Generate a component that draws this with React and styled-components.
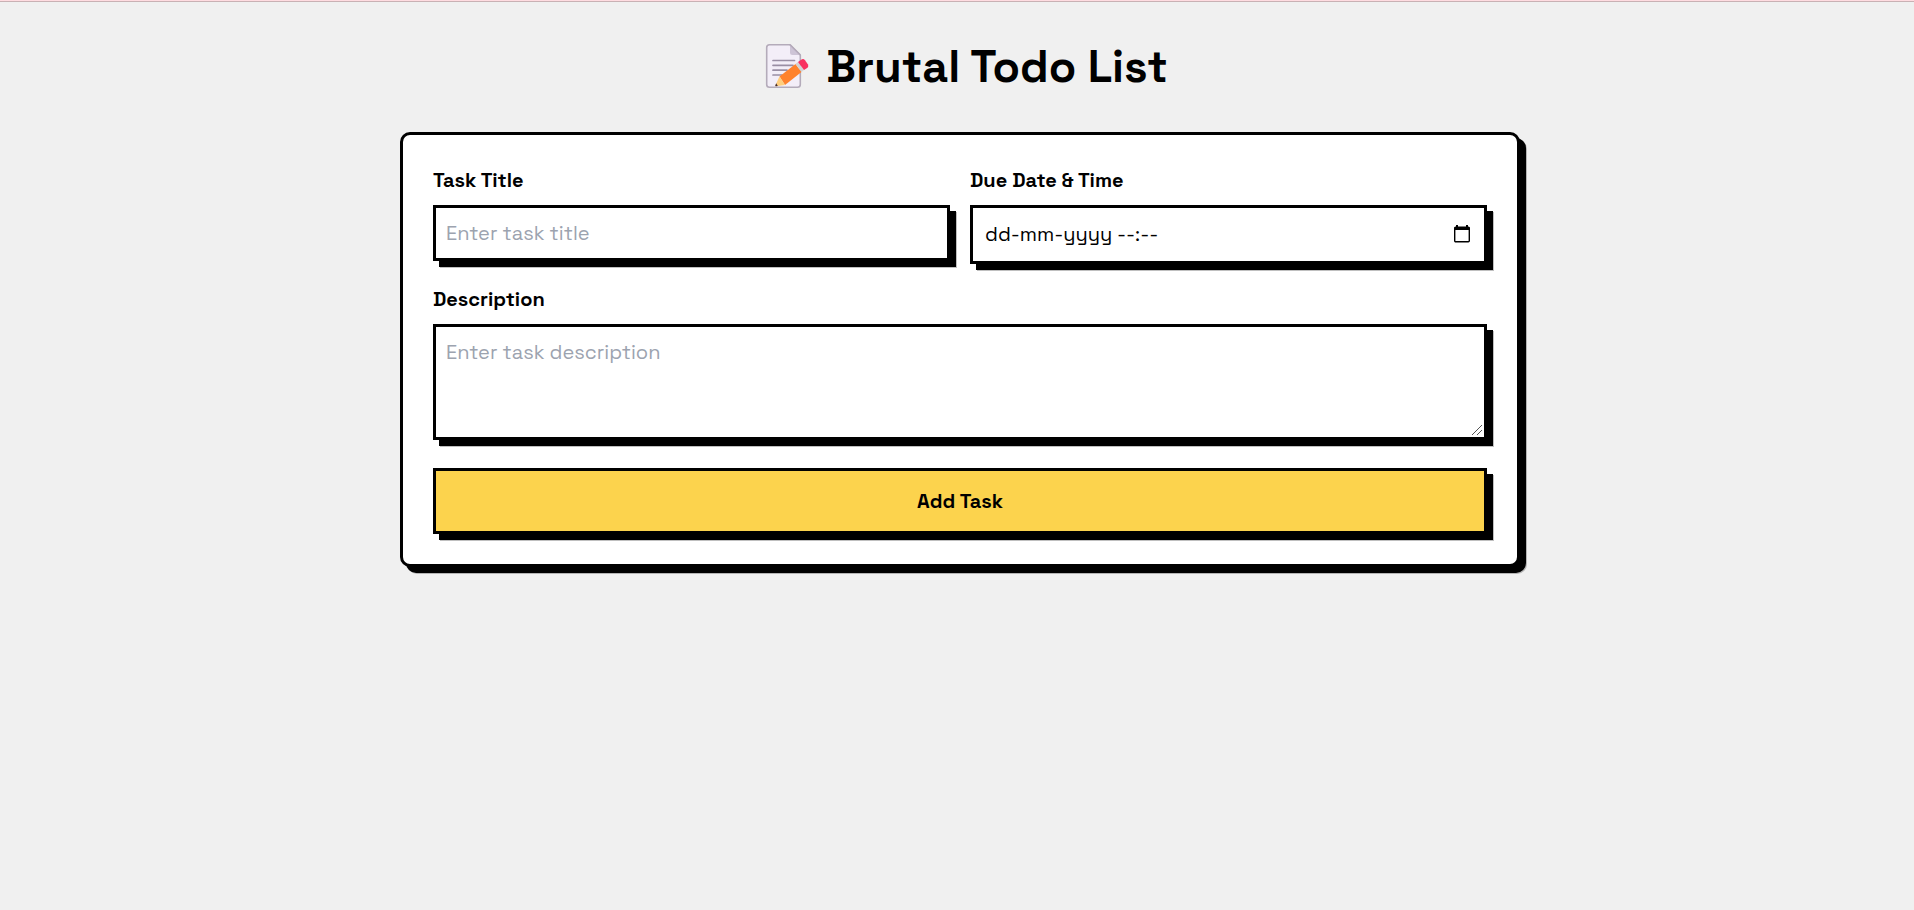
import React from "react";
import styled, { createGlobalStyle, css } from "styled-components";

const GlobalStyle = createGlobalStyle`
  *, *::before, *::after { box-sizing: border-box; }
  body {
    margin: 0;
    background: #f0f0f0;
    color: #000;
    font-family: "Space Grotesk", Inter, "Liberation Sans", sans-serif;
    font-size: 20px;
    line-height: 30px;
  }
  input, textarea, button { font: inherit; color: inherit; }
`;

const hardShadow = css`
  box-shadow: 6px 6px 0 #000, 7px 7px 0 rgba(0, 0, 0, 0.25);
`;

const Page = styled.div`
  border-top: 1px solid #ffdce1;
  box-shadow: inset 0 1px 0 #c9b1b4;
  padding: 41px 34px 40px 40px;
`;

const Container = styled.main`
  max-width: 1120px;
  margin: 0 auto;
`;

const Heading = styled.h1`
  display: flex;
  align-items: center;
  justify-content: center;
  gap: 12px;
  margin: 0 0 40px;
  font-size: 45px;
  line-height: 50px;
  font-weight: 700;
`;

const Form = styled.form`
  display: flex;
  flex-direction: column;
  gap: 20px;
  padding: 30px;
  background: #fff;
  border: 3px solid #000;
  border-radius: 10px;
  ${hardShadow}
`;

const FieldRow = styled.div`
  display: grid;
  grid-template-columns: 1fr 1fr;
  align-items: start;
  gap: 20px;
  @media (max-width: 760px) { grid-template-columns: 1fr; }
`;

const Field = styled.div`
  display: flex;
  flex-direction: column;
  gap: 10px;
  min-width: 0;
`;

const Label = styled.label`
  font-weight: 600;
`;

const boxed = css`
  width: 100%;
  background: #fff;
  border: 3px solid #000;
  border-radius: 0;
  ${hardShadow}
`;

const TextInput = styled.input`
  ${boxed}
  height: 56px;
  padding: 10px;
  outline: none;
  &::placeholder { color: #9ca3af; opacity: 1; }
`;

const TextArea = styled.textarea`
  ${boxed}
  display: block;
  padding: 10px;
  margin-bottom: 8px;
  outline: none;
  resize: vertical;
  &::placeholder { color: #9ca3af; opacity: 1; }
  &::-webkit-resizer {
    background: linear-gradient(
      135deg,
      transparent 45%, #555 46%, #555 53%, transparent 54%,
      transparent 70%, #555 71%, #555 78%, transparent 79%
    ) 3px 3px / 10px 10px no-repeat;
  }
`;

const DateBox = styled.div`
  ${boxed}
  display: flex;
  align-items: center;
  height: 59px;
  padding: 10px 13px 12px 12px;
`;

const DateInput = styled.input`
  flex: 1;
  min-width: 0;
  padding: 0;
  border: 0;
  outline: none;
  background: transparent;
  font-variant-numeric: tabular-nums;
  &::placeholder { color: #000; opacity: 1; }
`;

const PickerButton = styled.button`
  display: flex;
  padding: 0;
  border: 0;
  background: transparent;
  cursor: pointer;
`;

const SubmitButton = styled.button`
  ${boxed}
  padding: 15px;
  background: #fcd34d;
  font-weight: 600;
  cursor: pointer;
`;

const MemoIcon = () => (
  <svg width="62" height="50" viewBox="-2 0 62 50" aria-hidden="true">
    <path d="M15.500 2.700H36L46.300 13V42.500Q46.300 45.300 43.500 45.300H15.500Q12.700 45.300 12.700 42.500V5.500Q12.700 2.700 15.500 2.700Z" fill="#f3eef8" stroke="#b4abba" strokeWidth="1.600" />
    <path d="M36 2.700L46.300 13H38.500Q36 13 36 10.500Z" fill="#cdc4d6" />
    <path d="M36 2.700L46.300 13" stroke="#b4abba" strokeWidth="1.600" />
    <path d="M19 18.500H40.500M19 23.300H39M19 28.200H33M19 33H28" stroke="#998ea4" strokeWidth="1.700" strokeLinecap="round" />
    <path d="M25.500 34.500L41.500 22L47.500 30L31 43Z" fill="#ff822d" />
    <path d="M25.500 34.500L31 43L22 44.200Q21 44.300 21.400 43.200Z" fill="#ffce7c" />
    <path d="M22.200 41.200L23.800 43.900L22 44.200Q21 44.300 21.400 43.200Z" fill="#402a32" />
    <path d="M41.500 22L44 20L50 28L47.500 30Z" fill="#d3d3d3" />
    <path d="M44 20L47.500 17.400Q49.500 16.400 51 18.200L54 22.400Q54.900 24.400 53.500 25.700L50 28Z" fill="#f8315f" />
  </svg>
);

const CalendarIcon = () => (
  <svg width="18" height="20" viewBox="0 0 18 20" aria-hidden="true">
    <path d="M4 1V4M14 1V4" stroke="#000" strokeWidth="2" />
    <rect x="1.700" y="3.200" width="14.600" height="14.600" rx="1" fill="none" stroke="#000" strokeWidth="1.400" />
    <path d="M1.500 3H16.500V6H1.500Z" fill="#000" />
  </svg>
);

export default function App() {
  return (
    <Page>
      <GlobalStyle />
      <Container>
        <Heading><MemoIcon />Brutal Todo List</Heading>
        <Form onSubmit={(e) => e.preventDefault()}>
          <FieldRow>
            <Field>
              <Label htmlFor="title">Task Title</Label>
              <TextInput id="title" type="text" placeholder="Enter task title" />
            </Field>
            <Field>
              <Label htmlFor="due">Due Date &amp; Time</Label>
              <DateBox>
                <DateInput id="due" type="text" placeholder="dd-mm-yyyy --:--" />
                <PickerButton type="button" aria-label="Show date picker"><CalendarIcon /></PickerButton>
              </DateBox>
            </Field>
          </FieldRow>
          <Field>
            <Label htmlFor="description">Description</Label>
            <TextArea id="description" rows={3} placeholder="Enter task description" />
          </Field>
          <SubmitButton type="submit">Add Task</SubmitButton>
        </Form>
      </Container>
    </Page>
  );
}
